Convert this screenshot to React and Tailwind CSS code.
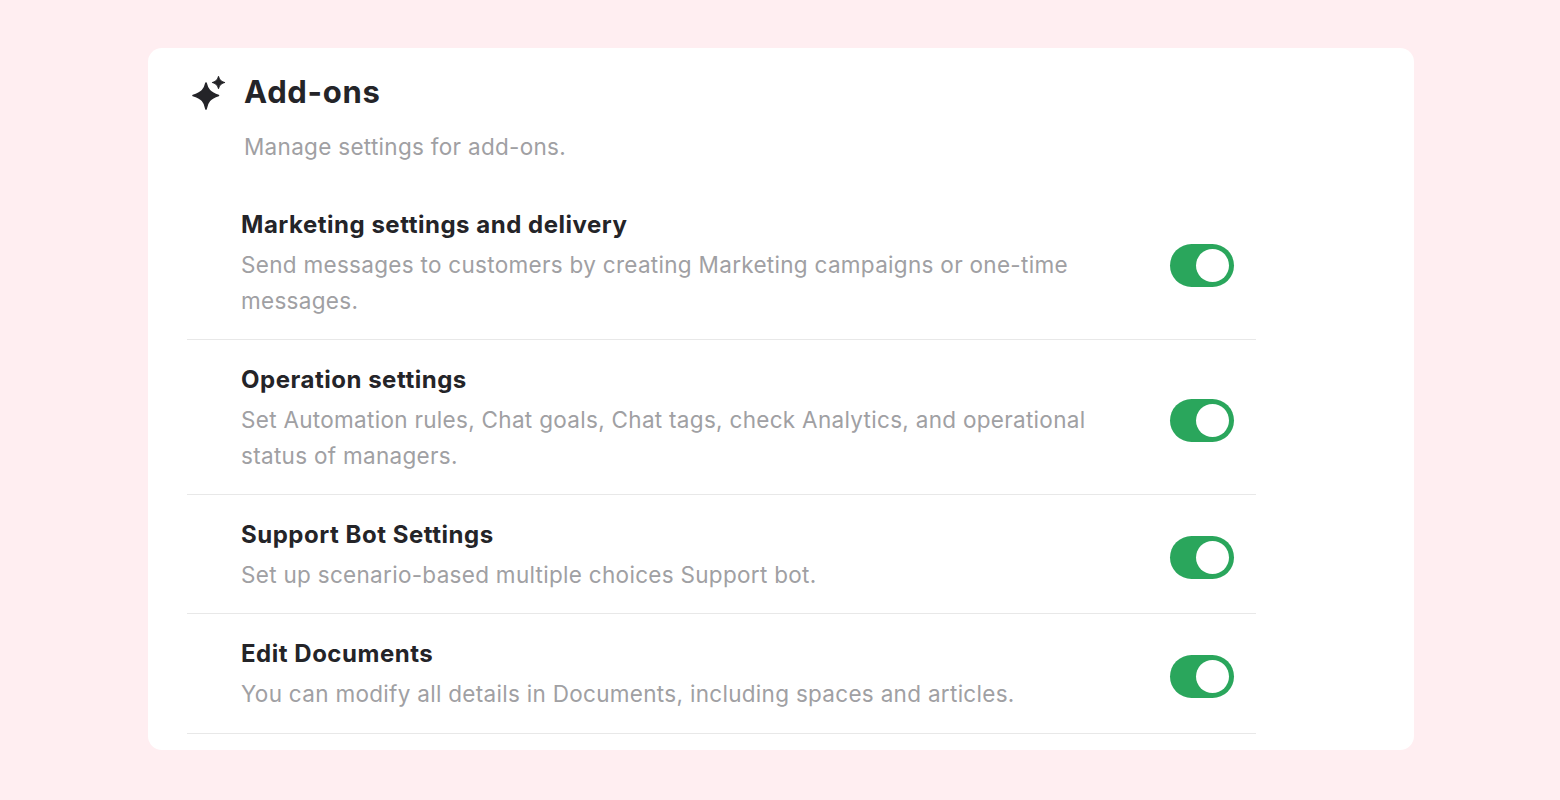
const rows = [
  {
    title: 'Marketing settings and delivery',
    desc: 'Send messages to customers by creating Marketing campaigns or one-time messages.',
  },
  {
    title: 'Operation settings',
    desc: 'Set Automation rules, Chat goals, Chat tags, check Analytics, and operational status of managers.',
  },
  {
    title: 'Support Bot Settings',
    desc: 'Set up scenario-based multiple choices Support bot.',
  },
  {
    title: 'Edit Documents',
    desc: 'You can modify all details in Documents, including spaces and articles.',
  },
];

const Sparkles = () => (
  <svg width="38" height="36" viewBox="0 0 38 36" className="shrink-0">
    <path
      d="M16 9 C17.4 15.5 20 18.6 28.5 21.5 C20 24.4 17.4 27.5 16 35 C14.6 27.5 12 24.4 3 21.5 C12 18.6 14.6 15.5 16 9 Z"
      fill="#242428"
      stroke="#242428"
      strokeWidth="1.6"
      strokeLinejoin="round"
    />
    <path
      d="M28.5 2.5 C29.2 6 30.6 7.4 34.5 8.5 C30.6 9.6 29.2 11 28.5 14.5 C27.8 11 26.4 9.6 22.5 8.5 C26.4 7.4 27.8 6 28.5 2.5 Z"
      fill="#242428"
      stroke="#242428"
      strokeWidth="1.2"
      strokeLinejoin="round"
    />
  </svg>
);

const Toggle = () => (
  <div className="mb-[2px] flex h-[43px] w-[64px] shrink-0 items-center justify-end rounded-full bg-[#2aa65c] pr-[5px]">
    <div className="h-[33px] w-[33px] rounded-full bg-white" />
  </div>
);

const Row = ({ title, desc }) => (
  <div className="flex items-center justify-between border-b border-[#e8e8e8] pt-[29px] pb-[20px] pl-[54px] pr-[22px] last:pb-[21px]">
    <div className="w-[860px]">
      <h3 className="mb-[11px] text-[24px] leading-[22px] font-bold tracking-[0.52px] text-[#242428]">{title}</h3>
      <p className="text-[22.5px] leading-[36px] tracking-[0.3px] text-[#a0a0a3]">{desc}</p>
    </div>
    <Toggle />
  </div>
);

const App = () => {
  return (
    <div className="h-[800px] bg-[#ffeef1] px-[148px] pt-[48px] font-['Inter',sans-serif]">
      <div className="h-[702px] w-[1266px] rounded-[14px] bg-white pl-[39px]">
        <div className="w-[1069px]">
          {/* header */}
          <div className="flex items-center gap-[16px] pt-[26px] pl-[3px]">
            <Sparkles />
            <h2 className="text-[31px] leading-[36px] font-bold tracking-[0.7px] text-[#242428]">Add-ons</h2>
          </div>
          <p className="mt-[21px] mb-[22px] pl-[57px] text-[22.5px] leading-[32px] tracking-[0.3px] text-[#a0a0a3]">
            Manage settings for add-ons.
          </p>
          {rows.map((row) => (
            <Row key={row.title} title={row.title} desc={row.desc} />
          ))}
        </div>
      </div>
    </div>
  );
};

export default App;
